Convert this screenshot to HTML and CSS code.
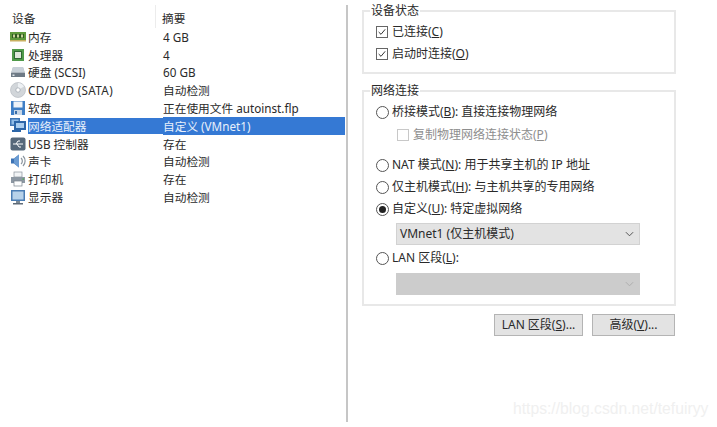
FILE: index.html
```html
<!DOCTYPE html>
<html lang="zh">
<head>
<meta charset="utf-8">
<title>虚拟机设置</title>
<link rel="stylesheet" href="styles.css">
</head>
<body>
<div class="app">
  <section class="devices">
    <div class="head"><div class="h1">设备</div><div class="h2">摘要</div></div>
    <div class="row"><div class="name"><svg class="ic" viewBox="0 0 16 16"><rect x="0" y="3" width="16" height="9" fill="#5f9a3c"/><rect x="2" y="5" width="12" height="4" fill="#2f5c20"/><rect x="3" y="5.500" width="2" height="3" fill="#c9d39a"/><rect x="7" y="5.500" width="2" height="3" fill="#c9d39a"/><rect x="11" y="5.500" width="2" height="3" fill="#c9d39a"/><rect x="0" y="11" width="16" height="1.500" fill="#c8b060"/></svg><span>内存</span></div><div class="val">4 GB</div></div>
    <div class="row"><div class="name"><svg class="ic" viewBox="0 0 16 16"><rect x="2" y="2" width="12" height="12" fill="#4f9a4a"/><rect x="4.500" y="4.500" width="7" height="7" fill="#dfe8dc" stroke="#2f6a33"/></svg><span>处理器</span></div><div class="val">4</div></div>
    <div class="row"><div class="name"><svg class="ic" viewBox="0 0 16 16"><path d="M3 3h10l2 6v4H1V9z" fill="#aeb6be"/><path d="M1 9h14v4H1z" fill="#6e7a86"/><path d="M3 3h10l1.500 5h-13z" fill="#c8d0d8"/><rect x="2.500" y="10.500" width="2" height="1.500" fill="#dfe6ea"/></svg><span>硬盘 (SCSI)</span></div><div class="val">60 GB</div></div>
    <div class="row"><div class="name"><svg class="ic" viewBox="0 0 16 16"><circle cx="8" cy="8" r="7.500" fill="#d2d6da" stroke="#b0b6bc" stroke-width=".6"/><path d="M8 1a7 7 0 0 1 6 3.500L8 8z" fill="#eef1f4"/><circle cx="8" cy="8" r="2.200" fill="#fff" stroke="#9aa2aa" stroke-width=".7"/></svg><span class="wide">CD/DVD (SATA)</span></div><div class="val">自动检测</div></div>
    <div class="row"><div class="name"><svg class="ic" viewBox="0 0 16 16"><rect x="1" y="1" width="14" height="14" fill="#3f7fc6"/><rect x="3.500" y="1.500" width="9" height="6" fill="#eef3f8"/><rect x="4" y="10" width="8" height="5" fill="#c7d6e6"/><rect x="5" y="11" width="2" height="3" fill="#3a6ea8"/></svg><span>软盘</span></div><div class="val">正在使用文件 autoinst.flp</div></div>
    <div class="row selected"><div class="name"><svg class="ic" viewBox="0 0 16 16"><rect x="0" y="0" width="10" height="8" fill="#3f76b4"/><rect x="1.500" y="1.500" width="7" height="5" fill="#8fbbe6"/><rect x="4" y="3" width="12" height="9" fill="#2c66a8"/><rect x="6" y="5" width="8" height="5" fill="#a9cdee"/><rect x="2" y="12" width="9" height="2" fill="#2c66a8"/></svg><span>网络适配器</span></div><div class="val">自定义 (VMnet1)</div></div>
    <div class="row"><div class="name"><svg class="ic" viewBox="0 0 16 16"><rect x="0.500" y="1.500" width="15" height="13" rx="2" fill="#56687a"/><path d="M3 8h10M6 8l2-3h2M7 8l2 3h2" fill="none" stroke="#fff" stroke-width="1"/></svg><span>USB 控制器</span></div><div class="val">存在</div></div>
    <div class="row"><div class="name"><svg class="ic" viewBox="0 0 16 16"><path d="M1 5.500h3l5-4v13l-5-4H1z" fill="#3c72b4"/><path d="M4 5.500l5-4v13l-5-4z" fill="#6a9bd2"/><path d="M11 5a4 4 0 0 1 0 6M13 3a7 7 0 0 1 0 10" fill="none" stroke="#8a949e" stroke-width="1.200"/></svg><span>声卡</span></div><div class="val">自动检测</div></div>
    <div class="row"><div class="name"><svg class="ic" viewBox="0 0 16 16"><rect x="4" y="1" width="8" height="5" fill="#f2f4f6" stroke="#8a939c" stroke-width=".7"/><rect x="1" y="6" width="14" height="6" fill="#8d98a3"/><rect x="4" y="10" width="8" height="5" fill="#fff" stroke="#7a838c" stroke-width=".7"/><rect x="12.500" y="7.500" width="1.500" height="1.200" fill="#49b04c"/></svg><span>打印机</span></div><div class="val">存在</div></div>
    <div class="row"><div class="name"><svg class="ic" viewBox="0 0 16 16"><rect x="1" y="1" width="14" height="11" fill="#4a7db4"/><rect x="2.500" y="2.500" width="11" height="8" fill="#b7d2ea"/><rect x="6" y="12" width="4" height="2" fill="#7d8a96"/><rect x="3" y="14" width="10" height="1.500" fill="#5e6b78"/></svg><span>显示器</span></div><div class="val">自动检测</div></div>
  </section>
  <section class="settings">
    <fieldset class="group state">
      <legend>设备状态</legend>
      <label class="opt"><span class="check"><svg viewBox="0 0 12 12"><path d="M2 6l2.800 2.800 5-6" fill="none" stroke="#333" stroke-width="1.200"/></svg></span>已连接(<u>C</u>)</label>
      <label class="opt"><span class="check"><svg viewBox="0 0 12 12"><path d="M2 6l2.800 2.800 5-6" fill="none" stroke="#333" stroke-width="1.200"/></svg></span>启动时连接(<u>O</u>)</label>
    </fieldset>
    <fieldset class="group net">
      <legend>网络连接</legend>
      <label class="opt"><span class="radio"></span>桥接模式(<u>B</u>): 直接连接物理网络</label>
      <label class="opt sub disabled"><span class="check off"></span>复制物理网络连接状态(<u>P</u>)</label>
      <label class="opt nat"><span class="radio"></span>NAT 模式(<u>N</u>): 用于共享主机的 IP 地址</label>
      <label class="opt"><span class="radio"></span>仅主机模式(<u>H</u>): 与主机共享的专用网络</label>
      <label class="opt"><span class="radio on"></span>自定义(<u>U</u>): 特定虚拟网络</label>
      <div class="select">VMnet1 (仅主机模式)<svg class="chev" viewBox="0 0 10 6"><path d="M1 1l4 4 4-4" fill="none" stroke="#444" stroke-width="1"/></svg></div>
      <label class="opt"><span class="radio"></span>LAN 区段(<u>L</u>):</label>
      <div class="select off"><svg class="chev" viewBox="0 0 10 6"><path d="M1 1l4 4 4-4" fill="none" stroke="#aaa" stroke-width="1"/></svg></div>
    </fieldset>
    <div class="buttons">
      <div class="btn lan">LAN 区段(<u>S</u>)...</div>
      <div class="btn adv">高级(<u>V</u>)...</div>
    </div>
  </section>
</div>
<div class="mark">https://blog.csdn.net/tefuiryy</div>
</body>
</html>
```
FILE: styles.css
```css
* { box-sizing: border-box; }
html, body { margin: 0; height: 100%; background: #fff; overflow: hidden; }
body {
  position: relative;
  font: 11.7px/16px "Noto Sans", "Noto Sans CJK SC", sans-serif;
  color: #2a2a2a;
}
.app { display: flex; height: 422px; padding-top: 5px; }
.devices { width: 348px; flex: none; border-right: 2px solid #c6c6c6; padding-right: 1px; }
.head { display: flex; height: 23px; }
.h1 { width: 156px; padding: 5px 0 0 12px; border-right: 1px solid #ececec; }
.h2 { flex: 1; padding: 5px 0 0 6px; }
.row { display: flex; height: 17.800px; align-items: center; white-space: nowrap; }
.name { width: 163px; flex: none; display: flex; align-items: center; padding-left: 10px; }
.ic { width: 16px; height: 16px; flex: none; margin-right: 2px; }
.val { flex: 1; }
.wide { letter-spacing: .35px; }
.selected { align-items: stretch; color: #e8f0fb; }
.selected .name span { flex: 1; display: flex; align-items: center; background: #3579d4; }
.selected .val { display: flex; align-items: center; background: #3579d4; }
.settings { flex: 1; padding: 0 0 0 14px; width: 0; font-size: 12px; }
.group {
  margin: 0;
  width: 314px;
  border: 2px solid #e8e8e8;
  padding: 0 0 0 12px;
  min-width: 0;
}
.group legend { padding: 0 1px; margin-left: -6px; line-height: 12px; }
.state { height: 69px; padding-top: 4px; }
.net { height: 221px; margin-top: 11px; padding-top: 4px; }
.opt { display: flex; align-items: center; height: 22px; white-space: pre; }
.check, .radio { height: 12px; flex: none; display: block; background: #fff; }
.check { width: 12px; margin-right: 4px; border: 1px solid #666; }
.check svg { display: block; width: 10px; height: 10px; }
.check.off { border-color: #c8c8c8; }
.radio { width: 13px; height: 13px; margin-right: 3px; border: 1px solid #555; border-radius: 50%; position: relative; }
.radio.on::after { content: ""; position: absolute; inset: 2px; border-radius: 50%; background: #222; }
.sub { padding-left: 21px; margin-top: 1px; }
.disabled { color: #8e8e8e; }
.nat { margin-top: 8px; }
.select {
  margin: 3px 0 2px 20px;
  width: 244px;
  height: 22px;
  background: #e3e3e3;
  border: 1px solid #d2d2d2;
  display: flex;
  align-items: center;
  justify-content: space-between;
  padding: 0 5px 0 3px;
}
.select.off { background: #cccccc; border-color: #cccccc; margin-top: 4px; }
.chev { width: 9px; height: 6px; flex: none; margin-left: auto; }
.buttons { display: flex; width: 314px; margin-top: 8px; justify-content: flex-end; gap: 9px; padding-right: 1px; }
.btn {
  height: 22px;
  background: #e3e3e3;
  border: 1px solid #b4b4b4;
  display: flex;
  align-items: center;
  justify-content: center;
  white-space: pre;
}
.lan { width: 89px; }
.adv { width: 83px; }
.mark {
  position: absolute;
  left: 513px;
  top: 400px;
  font: 15.700px/18px "Liberation Sans", sans-serif;
  color: #f0f0f0;
}
```
